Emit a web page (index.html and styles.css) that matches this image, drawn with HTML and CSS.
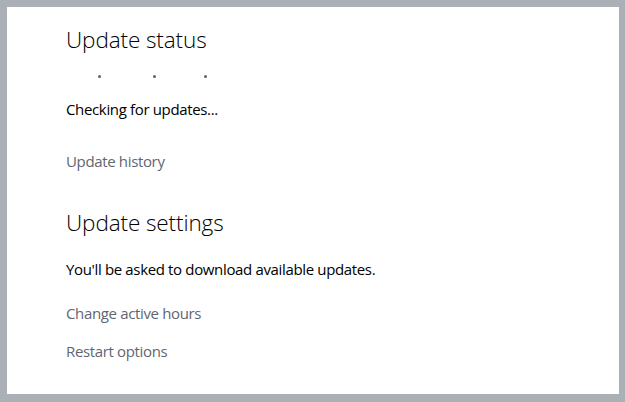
FILE: index.html
```html
<!DOCTYPE html>
<html lang="en">
<head>
<meta charset="utf-8">
<title>Windows Update</title>
<link rel="stylesheet" href="styles.css">
</head>
<body>
<main class="panel">
  <section class="section">
    <h2 class="heading">Update status</h2>
    <div class="dots"><span class="dot"></span><span class="dot dot-mid"></span><span class="dot dot-last"></span></div>
    <p class="text status">Checking for updates...</p>
    <a class="link history" href="#">Update history</a>
  </section>
  <section class="section">
    <h2 class="heading settings">Update settings</h2>
    <p class="text notice">You'll be asked to download available updates.</p>
    <a class="link active-hours" href="#">Change active hours</a>
    <a class="link restart" href="#">Restart options</a>
  </section>
</main>
</body>
</html>
```
FILE: styles.css
```css
html, body {
  margin: 0;
  padding: 0;
  height: 100%;
}
body {
  background: #abafb6;
  font-family: "Open Sans", "Noto Sans", sans-serif;
  padding: 7px 6px 8px 7px;
  box-sizing: border-box;
}
.panel {
  background: #ffffff;
  height: 100%;
  box-sizing: border-box;
  padding: 18px 0 0 59px;
}
.section {
  display: flex;
  flex-direction: column;
  align-items: flex-start;
}
.heading {
  margin: 0;
  font-size: 22.5px;
  line-height: 30px;
  font-weight: 300;
  color: #000;
  letter-spacing: -0.1px;
}
.dots {
  display: flex;
  margin-top: 20px;
  height: 3px;
  padding-left: 32px;
}
.dot {
  width: 3px;
  height: 3px;
  border-radius: 50%;
  background: #5b6370;
}
.dot-mid { margin-left: 52px; }
.dot-last { margin-left: 48px; }
.text {
  margin: 0;
  font-size: 15px;
  line-height: 20px;
  color: #000;
  letter-spacing: -0.35px;
}
.status { margin-top: 21px; }
.link {
  font-size: 15px;
  line-height: 20px;
  color: #5f6672;
  text-decoration: none;
  letter-spacing: -0.35px;
}
.history { margin-top: 32px; }
.settings { margin-top: 37px; }
.notice { margin-top: 21px; }
.active-hours { margin-top: 24px; }
.restart { margin-top: 18px; }
```
